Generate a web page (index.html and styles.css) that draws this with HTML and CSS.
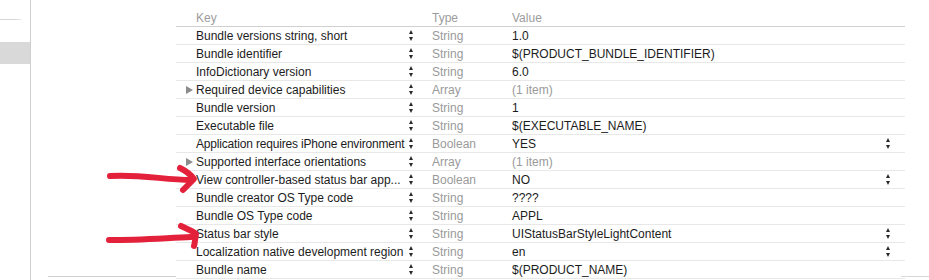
FILE: index.html
```html
<!DOCTYPE html>
<html>
<head>
<meta charset="utf-8">
<link rel="stylesheet" href="styles.css">
</head>
<body>
<div class="page">
  <aside class="sidebar">
    <div class="side-line"></div>
    <div class="side-sel"></div>
  </aside>
  <div class="gap"><div class="gap-line"></div></div>
  <main class="plist">
    <div class="row head">
      <span class="tri"></span><span class="key">Key</span><span class="step"></span><span class="type">Type</span><span class="val">Value</span><span class="rstep"></span>
    </div>
    <div class="row"><span class="tri"></span><span class="key">Bundle versions string, short</span><span class="step"><i class="up"></i><i class="dn"></i></span><span class="type">String</span><span class="val">1.0</span><span class="rstep"></span></div>
    <div class="row"><span class="tri"></span><span class="key">Bundle identifier</span><span class="step"><i class="up"></i><i class="dn"></i></span><span class="type">String</span><span class="val">$(PRODUCT_BUNDLE_IDENTIFIER)</span><span class="rstep"></span></div>
    <div class="row"><span class="tri"></span><span class="key">InfoDictionary version</span><span class="step"><i class="up"></i><i class="dn"></i></span><span class="type">String</span><span class="val">6.0</span><span class="rstep"></span></div>
    <div class="row"><span class="tri"><i class="disc"></i></span><span class="key">Required device capabilities</span><span class="step"><i class="up"></i><i class="dn"></i></span><span class="type">Array</span><span class="val dim">(1 item)</span><span class="rstep"></span></div>
    <div class="row"><span class="tri"></span><span class="key">Bundle version</span><span class="step"><i class="up"></i><i class="dn"></i></span><span class="type">String</span><span class="val">1</span><span class="rstep"></span></div>
    <div class="row"><span class="tri"></span><span class="key">Executable file</span><span class="step"><i class="up"></i><i class="dn"></i></span><span class="type">String</span><span class="val">$(EXECUTABLE_NAME)</span><span class="rstep"></span></div>
    <div class="row"><span class="tri"></span><span class="key tight">Application requires iPhone environment</span><span class="step"><i class="up"></i><i class="dn"></i></span><span class="type">Boolean</span><span class="val">YES</span><span class="rstep"><i class="up"></i><i class="dn"></i></span></div>
    <div class="row"><span class="tri"><i class="disc"></i></span><span class="key">Supported interface orientations</span><span class="step"><i class="up"></i><i class="dn"></i></span><span class="type">Array</span><span class="val dim">(1 item)</span><span class="rstep"></span></div>
    <div class="row"><span class="tri"></span><span class="key">View controller-based status bar app...</span><span class="step"><i class="up"></i><i class="dn"></i></span><span class="type">Boolean</span><span class="val">NO</span><span class="rstep"><i class="up"></i><i class="dn"></i></span></div>
    <div class="row"><span class="tri"></span><span class="key">Bundle creator OS Type code</span><span class="step"><i class="up"></i><i class="dn"></i></span><span class="type">String</span><span class="val">????</span><span class="rstep"></span></div>
    <div class="row"><span class="tri"></span><span class="key">Bundle OS Type code</span><span class="step"><i class="up"></i><i class="dn"></i></span><span class="type">String</span><span class="val">APPL</span><span class="rstep"></span></div>
    <div class="row"><span class="tri"></span><span class="key">Status bar style</span><span class="step"><i class="up"></i><i class="dn"></i></span><span class="type">String</span><span class="val">UIStatusBarStyleLightContent</span><span class="rstep"><i class="up"></i><i class="dn"></i></span></div>
    <div class="row"><span class="tri"></span><span class="key">Localization native development region</span><span class="step"><i class="up"></i><i class="dn"></i></span><span class="type">String</span><span class="val">en</span><span class="rstep"><i class="up"></i><i class="dn"></i></span></div>
    <div class="row"><span class="tri"></span><span class="key">Bundle name</span><span class="step"><i class="up"></i><i class="dn"></i></span><span class="type">String</span><span class="val">$(PRODUCT_NAME)</span><span class="rstep"></span></div>
  </main>
  <div class="corner-line"></div>
  <svg class="arrows" width="929" height="280" viewBox="0 0 929 280">
    <g fill="none" stroke="#e4213a" stroke-width="6" stroke-linecap="round" stroke-linejoin="round">
      <path d="M110 176 C 140 174, 165 180, 191 180"/>
      <path d="M180 168 C 186 171, 191 175, 194 179 C 190 183, 186 187, 183 190"/>
      <path d="M109 240 C 140 240, 165 238, 191 237"/>
      <path d="M181 226 C 187 229, 193 231, 196 234 C 195 239, 195 243, 194 246"/>
    </g>
  </svg>
</div>
</body>
</html>
```
FILE: styles.css
```css
html, body {
  margin: 0;
  padding: 0;
  background: #ffffff;
}
.page {
  position: relative;
  width: 929px;
  height: 280px;
  overflow: hidden;
  display: flex;
  font-family: "Liberation Sans", Arial, sans-serif;
  font-size: 12px;
  color: #1c1c1c;
}
.sidebar {
  width: 30px;
  flex: none;
  border-right: 1px solid #cfcfcf;
  display: flex;
  flex-direction: column;
}
.side-line {
  margin-top: 19px;
  width: 22px;
  height: 1px;
  background: linear-gradient(to right, #d6d6d6 70%, #f2f2f2);
}
.side-sel {
  margin-top: 22px;
  height: 22px;
  background: #d9d9d9;
}
.gap {
  width: 145px;
  flex: none;
  display: flex;
  flex-direction: column;
  justify-content: flex-end;
}
.gap-line {
  margin-left: 17px;
  margin-bottom: 3px;
  height: 1px;
  background: #d2d2d2;
}
.plist {
  width: 729px;
  flex: none;
  padding-top: 9px;
}
.row {
  display: grid;
  grid-template-columns: 20px 213px 23px 80px 1fr 23px;
  height: 18px;
  align-items: center;
  border-bottom: 1px solid #e8e8e8;
  box-sizing: border-box;
  white-space: nowrap;
}
.row.head {
  border-bottom-color: #d0d0d0;
  color: #9c9c9c;
}
.row.head .type { color: #9c9c9c; }
.tri {
  display: flex;
  justify-content: flex-end;
  padding-right: 3px;
}
.disc {
  width: 0;
  height: 0;
  border-top: 4px solid transparent;
  border-bottom: 4px solid transparent;
  border-left: 7px solid #8c8c8c;
}
.key { overflow: visible; }
.key.tight { letter-spacing: -0.18px; }
.type { color: #9a9a9a; }
.val.dim { color: #9a9a9a; }
.step, .rstep {
  display: flex;
  flex-direction: column;
  align-items: flex-start;
  gap: 3px;
}
.rstep { padding-left: 4px; }
.up {
  width: 0;
  height: 0;
  border-left: 2.5px solid transparent;
  border-right: 2.5px solid transparent;
  border-bottom: 4px solid #2a2a2a;
}
.dn {
  width: 0;
  height: 0;
  border-left: 2.5px solid transparent;
  border-right: 2.5px solid transparent;
  border-top: 4px solid #2a2a2a;
}
.corner-line {
  position: absolute;
  right: 0;
  bottom: 3px;
  width: 28px;
  height: 1px;
  background: #d8d8d8;
}
.arrows {
  position: absolute;
  left: 0;
  top: 0;
  pointer-events: none;
}
```
